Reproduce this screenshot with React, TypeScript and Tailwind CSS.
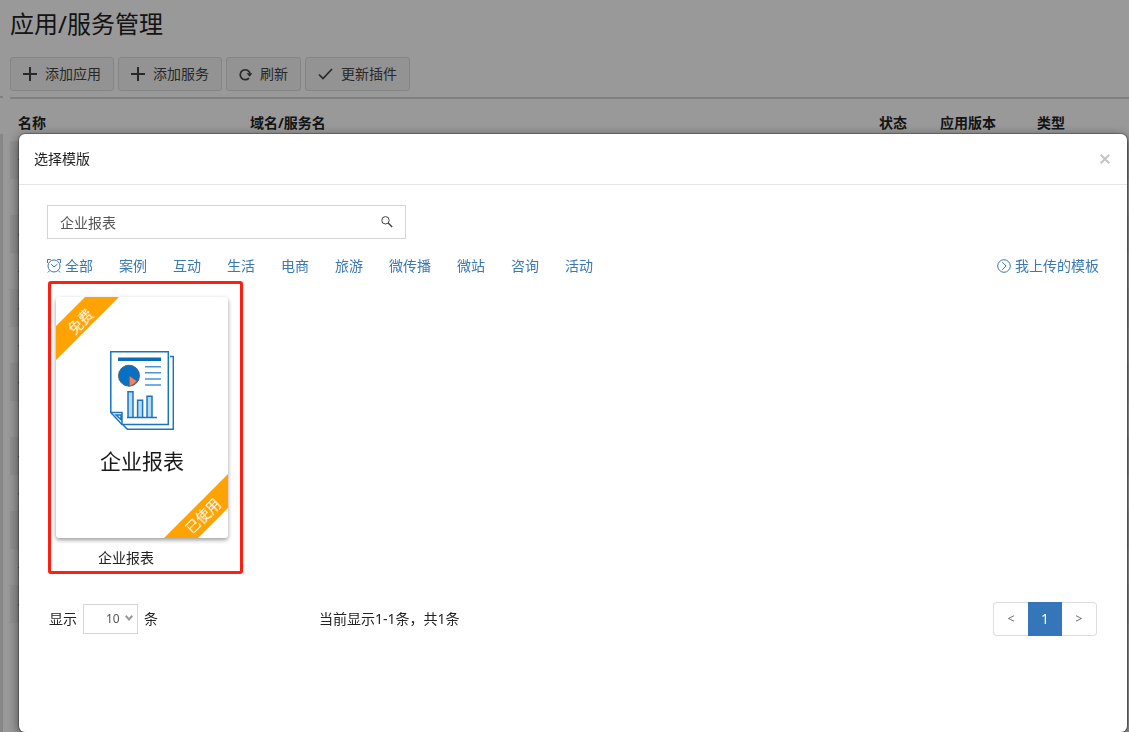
import { useState, type ReactNode } from "react";

const actions = [
  { label: "添加应用", icon: <PlusIcon /> },
  { label: "添加服务", icon: <PlusIcon /> },
  { label: "刷新", icon: <RefreshIcon /> },
  { label: "更新插件", icon: <CheckIcon /> },
];

const columns = ["名称", "域名/服务名", "状态", "应用版本", "类型"];

// Rows without a name stay blank in the first column.
const rows = ["—", "", "—", "—", "—", "—", "—", "", "—", "—", "", "—", "—"];

const categories = ["全部", "案例", "互动", "生活", "电商", "旅游", "微传播", "微站", "咨询", "活动"];

function PlusIcon() {
  return (
    <svg width="14" height="14" viewBox="0 0 14 14" stroke="currentColor" strokeWidth="2" aria-hidden="true">
      <path d="M7 0v14M0 7h14" />
    </svg>
  );
}

function RefreshIcon() {
  return (
    <svg width="13" height="13" viewBox="0 0 12 12" fill="none" aria-hidden="true">
      <path d="M9.2 9.3A4.6 4.6 0 1 1 10.2 5" stroke="currentColor" strokeWidth="1.6" />
      <path d="M7 4.8h5.4L9.8 8z" fill="currentColor" />
    </svg>
  );
}

function CheckIcon() {
  return (
    <svg width="15" height="14" viewBox="0 0 15 14" fill="none" stroke="currentColor" strokeWidth="1.7" aria-hidden="true">
      <path d="M1 7.5l4 4L14 2" />
    </svg>
  );
}

function SearchIcon() {
  return (
    <svg width="12" height="12" viewBox="0 0 12 12" fill="none" stroke="currentColor" aria-hidden="true">
      <circle cx="4.5" cy="4.3" r="3.7" strokeWidth="1" />
      <path d="M7.2 7l4 4" strokeWidth="1.4" />
    </svg>
  );
}

function AlarmIcon() {
  return (
    <svg width="14" height="14" viewBox="0 0 14 14" fill="none" stroke="currentColor" aria-hidden="true">
      <circle cx="7" cy="7" r="6" />
      <path d="M4 5l3 3 3.4-2.8M.5 4V.5h3.3M13.5 4V.5h-3.3M2.8 11.5L.8 13.5M11.2 11.5l2 2" />
    </svg>
  );
}

function CircleArrowIcon() {
  return (
    <svg width="14" height="14" viewBox="0 0 14 14" fill="none" stroke="currentColor" aria-hidden="true">
      <circle cx="7" cy="7" r="6.3" />
      <path d="M5.3 3.2L9 7l-3.7 3.8" />
    </svg>
  );
}

function ReportIcon() {
  return (
    <svg width="64" height="79" viewBox="0 0 64 79" fill="none" stroke="#1a75c0" strokeWidth="1.5" aria-hidden="true">
      <path d="M60 5.5h3.3v72.8H17.5L13 74" />
      <path d="M.8.8h57.5v72.7H12L.8 61.5z" fill="#fff" />
      <path d="M.8 61.5H12v12M6 64h5v4.5z" />
      <path d="M8 8.2h43" strokeWidth="3.6" stroke="#0b6cbd" />
      <path d="M35 15.8h16M35 21.8h16M35 28h16M35 34h16" stroke="#4a94d3" />
      <circle cx="19" cy="24.7" r="10.5" fill="#0570c4" stroke="#555f6b" strokeWidth="1" />
      <path d="M19.3 24.7v10.5a10.5 10.5 0 0 0 7.5-5.3z" fill="#e88468" stroke="#8a5a50" strokeWidth=".8" />
      <g fill="#b5dcf5">
        <path d="M18 66.3V40.7h5v25.6M27.6 66.3V49.2h5v17.1M37 66.3v-21h5v21" />
      </g>
      <path d="M17 66.5h30" />
    </svg>
  );
}

function Ribbon({ className, children }: { className: string; children: ReactNode }) {
  return (
    <span
      className={`absolute h-6 w-[120px] -rotate-45 bg-[#ffa304] text-center text-sm text-white ${className}`}
    >
      {children}
    </span>
  );
}

function TemplateCard({ name }: { name: string }) {
  return (
    <figure className="ml-px w-[195px] rounded-[3px] border-[3px] border-[#ff1e12] pt-[13px] pr-3 pb-[3px] pl-[5px]">
      <div className="relative flex h-[241px] flex-col items-center overflow-hidden rounded-[3px] pt-[54px] shadow-[0_2px_4px_rgba(0,0,0,0.4)]">
        <ReportIcon />
        <span className="mt-4 text-[21px] leading-[30px] text-[#1a1a1a]">{name}</span>
        <Ribbon className="top-[11px] left-[-37px] leading-7">免费</Ribbon>
        <Ribbon className="right-[-35px] bottom-[10px] leading-6">已使用</Ribbon>
      </div>
      <figcaption className="mt-[10px] mr-8 text-center text-sm leading-5">{name}</figcaption>
    </figure>
  );
}

function AppsPage() {
  return (
    <div className="flex min-h-screen">
      <div className="mt-24 flex w-[3px] shrink-0 flex-col border-t-2 border-[#d8d8d8] pt-9">
        <div className="flex-1 bg-[#e2e2e2]" />
      </div>
      <main className="ml-[7px] min-w-0 flex-1 pt-2">
        <h1 className="text-2xl leading-8">应用/服务管理</h1>
        <div className="mt-[17px] flex gap-1">
          {actions.map((a) => (
            <button
              key={a.label}
              type="button"
              className="flex h-[34px] items-center gap-2 rounded-[3px] border border-[#dedede] bg-[#f5f5f5] px-3 text-sm text-[#444]"
            >
              {a.icon}
              {a.label}
            </button>
          ))}
        </div>
        <table className="mt-[6px] w-full table-fixed border-t-2 border-[#d8d8d8] text-left text-sm leading-5">
          <colgroup>
            <col className="w-[232px]" />
            <col />
            <col className="w-[61px]" />
            <col className="w-[97px]" />
            <col className="w-[100px]" />
          </colgroup>
          <thead>
            <tr className="h-[43px]">
              {columns.map((c) => (
                <th key={c} className="px-2 pb-2 align-bottom font-bold">
                  {c}
                </th>
              ))}
            </tr>
          </thead>
          <tbody>
            {rows.map((name, i) => (
              <tr key={i} className="h-[37px] border-b border-[#f0f0f0] odd:bg-[#f3f3f3]">
                <td className="px-2">{name}</td>
                <td />
                <td />
                <td />
                <td />
              </tr>
            ))}
          </tbody>
        </table>
      </main>
    </div>
  );
}

function TemplateDialog() {
  const [keyword, setKeyword] = useState("企业报表");

  return (
    <div
      role="dialog"
      aria-labelledby="dialog-title"
      className="flex-1 rounded-md bg-white shadow-[0_3px_12px_rgba(0,0,0,0.6),0_0_0_1px_rgba(0,0,0,0.25)]"
    >
      <header className="flex h-[51px] items-center justify-between border-b border-[#e5e5e5] pr-[17px] pl-[15px]">
        <h2 id="dialog-title" className="text-sm leading-5">
          选择模版
        </h2>
        <button type="button" aria-label="关闭" className="text-[#c4c4c4]">
          <svg width="10" height="10" viewBox="0 0 10 10" stroke="currentColor" strokeWidth="2" aria-hidden="true">
            <path d="M.7.7l8.6 8.6M9.3.7L.7 9.3" />
          </svg>
        </button>
      </header>

      <div className="px-7 pt-5">
        <form className="flex h-[34px] w-[359px] items-center border border-[#d5d5d5] px-3">
          <input
            type="text"
            aria-label="搜索模版"
            value={keyword}
            onChange={(e) => setKeyword(e.target.value)}
            className="min-w-0 flex-1 pt-px text-sm leading-5 text-[#555] outline-none"
          />
          <button type="button" aria-label="搜索" className="text-[#444]">
            <SearchIcon />
          </button>
        </form>

        <nav className="mt-[17px] flex items-center gap-[26px] text-sm leading-5 text-[#3a78b2]">
          {categories.map((c, i) => (
            <a key={c} href="#" className="flex items-center gap-1">
              {i === 0 && <AlarmIcon />}
              {c}
            </a>
          ))}
          <a href="#" className="ml-auto flex items-center gap-1">
            <CircleArrowIcon />
            我上传的模板
          </a>
        </nav>

        <div className="mt-[5px]">
          <TemplateCard name="企业报表" />
        </div>

        <footer className="mt-7 flex h-[34px] items-center px-[2px] text-sm leading-5">
          <div className="flex w-[270px] items-center gap-[6px]">
            <label htmlFor="page-size">显示</label>
            <span className="relative">
              <select
                id="page-size"
                defaultValue="10"
                className="block h-[30px] w-[55px] appearance-none border border-[#d5d5d5] bg-white pl-[22px] text-xs text-[#555]"
              >
                <option>10</option>
                <option>20</option>
                <option>50</option>
              </select>
              <svg
                className="pointer-events-none absolute top-[11px] right-[5px] text-[#999]"
                width="8"
                height="6"
                viewBox="0 0 8 6"
                fill="none"
                stroke="currentColor"
                strokeWidth="2"
                aria-hidden="true"
              >
                <path d="M.7.8L4 4.4 7.3.8" />
              </svg>
            </span>
            <span>条</span>
          </div>
          <p>当前显示1-1条，共1条</p>
          <nav aria-label="分页" className="ml-auto flex h-[34px] w-[104px] text-xs text-[#666]">
            <button type="button" className="flex-1 rounded-l border border-r-0 border-[#ddd]">
              &lt;
            </button>
            <button type="button" aria-current="page" className="w-[34px] bg-[#3576bb] text-sm text-white">
              1
            </button>
            <button type="button" className="flex-1 rounded-r border border-l-0 border-[#ddd]">
              &gt;
            </button>
          </nav>
        </footer>
      </div>
    </div>
  );
}

export default function App() {
  return (
    <div className="min-h-screen bg-white font-['Noto_Sans','Noto_Sans_CJK_SC',sans-serif] text-[#222]">
      <AppsPage />
      <div className="fixed inset-0 flex bg-black/40 pt-[134px] pr-[2px] pl-[19px]">
        <TemplateDialog />
      </div>
    </div>
  );
}
